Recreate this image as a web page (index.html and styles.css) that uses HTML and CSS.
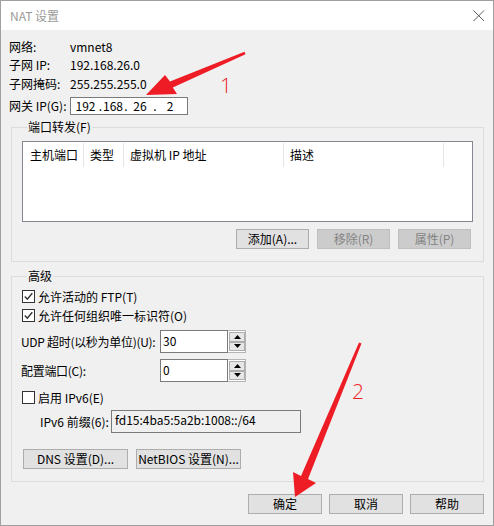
FILE: index.html
```html
<!DOCTYPE html>
<html lang="zh-CN">
<head>
<meta charset="utf-8">
<title>NAT 设置</title>
<link rel="stylesheet" href="styles.css">
</head>
<body>
<div class="window">
  <div class="titlebar">
    <span class="title">NAT 设置</span>
    <svg class="close" width="12" height="12" viewBox="0 0 12 12"><path d="M0.5 0.5 L11 11 M11 0.5 L0.5 11" stroke="#5a5a5a" stroke-width="1" fill="none"/></svg>
  </div>
  <div class="info">
    <div class="irow"><span class="lbl">网络:</span><span>vmnet8</span></div>
    <div class="irow"><span class="lbl">子网 IP:</span><span>192.168.26.0</span></div>
    <div class="irow r3"><span class="lbl">子网掩码:</span><span>255.255.255.0</span></div>
    <div class="irow gw"><span class="lbl">网关 IP(G):</span>
      <div class="ipbox"><span>192</span><span>.</span><span>168</span><span>.</span><span>26</span><span>.</span><span>2</span></div>
    </div>
  </div>
  <fieldset class="group pf">
    <legend>端口转发(F)</legend>
    <div class="list">
      <div class="lhead">
        <div class="col c1">主机端口</div>
        <div class="col c2">类型</div>
        <div class="col c3">虚拟机 IP 地址</div>
        <div class="col c4">描述</div>
      </div>
    </div>
    <div class="btnrow">
      <button class="btn">添加(A)...</button>
      <button class="btn dis">移除(R)</button>
      <button class="btn dis">属性(P)</button>
    </div>
  </fieldset>
  <fieldset class="group adv">
    <legend>高级</legend>
    <div class="chk"><span class="box"><svg width="11" height="11" viewBox="0 0 11 11"><path d="M1.8 5.6 L4.3 8.3 L9.3 2.2" stroke="#333" stroke-width="1.4" fill="none"/></svg></span><span>允许活动的 FTP(T)</span></div>
    <div class="chk"><span class="box"><svg width="11" height="11" viewBox="0 0 11 11"><path d="M1.8 5.6 L4.3 8.3 L9.3 2.2" stroke="#333" stroke-width="1.4" fill="none"/></svg></span><span>允许任何组织唯一标识符(O)</span></div>
    <div class="spinrow"><span class="lbl2">UDP 超时(以秒为单位)(U):</span>
      <div class="edit">30</div>
      <div class="spin">
        <span class="sbtn"><svg width="7" height="4" viewBox="0 0 7 4"><path d="M0 4 L3.5 0 L7 4 Z" fill="#000"/></svg></span>
        <span class="sbtn"><svg width="7" height="4" viewBox="0 0 7 4"><path d="M0 0 L7 0 L3.5 4 Z" fill="#000"/></svg></span>
      </div>
    </div>
    <div class="spinrow"><span class="lbl2">配置端口(C):</span>
      <div class="edit">0</div>
      <div class="spin">
        <span class="sbtn"><svg width="7" height="4" viewBox="0 0 7 4"><path d="M0 4 L3.5 0 L7 4 Z" fill="#000"/></svg></span>
        <span class="sbtn"><svg width="7" height="4" viewBox="0 0 7 4"><path d="M0 0 L7 0 L3.5 4 Z" fill="#000"/></svg></span>
      </div>
    </div>
    <div class="chk ipv6chk"><span class="box"></span><span>启用 IPv6(E)</span></div>
    <div class="ip6"><span class="lbl3">IPv6 前缀(6):</span><div class="ro">fd15:4ba5:5a2b:1008::/64</div></div>
    <div class="dnsrow">
      <button class="btn">DNS 设置(D)...</button>
      <button class="btn">NetBIOS 设置(N)...</button>
    </div>
  </fieldset>
  <div class="footer">
    <button class="btn">确定</button>
    <button class="btn">取消</button>
    <button class="btn">帮助</button>
  </div>
</div>
<svg class="anno" width="494" height="526" viewBox="0 0 494 526">
  <polygon points="146,95 165,75 170,81.5 244.5,51.8 245.5,54.2 172.8,87.6 177,94" fill="#ee1c25"/>
  <polygon points="295,497 293,472 301,476 359,342.5 361.5,343.5 308,479 316,483" fill="#ee1c25"/>
  <text x="220" y="93" class="num">1</text>
  <text x="352" y="399" class="num">2</text>
</svg>
</body>
</html>
```
FILE: styles.css
```css
* { box-sizing: border-box; }
html, body { margin: 0; padding: 0; }
body {
  position: relative;
  font-family: "Noto Sans CJK SC", "Noto Sans", sans-serif;
  font-size: 12px;
  line-height: 16px;
  color: #000;
  background: #fff;
}
.window {
  width: 494px;
  height: 526px;
  border: 1px solid #a0a0a0;
  background: #f0f0f0;
  display: flex;
  flex-direction: column;
}
.titlebar {
  height: 29px;
  flex: none;
  background: #fff;
  display: flex;
  align-items: center;
  justify-content: space-between;
  padding-left: 9px;
  padding-right: 8px;
}
.title { color: #9a9a9a; }
.close { width: 12px; height: 12px; }

.info { padding: 8px 0 0 8px; }
.irow { display: flex; align-items: center; height: 18px; }
.irow.r3 { height: 19px; }
.irow.gw { margin-top: 4px; }
.lbl { width: 61px; flex: none; }
.ipbox {
  width: 118px;
  height: 18px;
  border: 1px solid #7a7a7a;
  background: #fff;
  display: grid;
  grid-template-columns: 25px 5px 18px 10px 18px 12px 18px;
  padding-left: 2px;
  align-items: center;
  text-align: center;
  line-height: 16px;
}

.group {
  margin: 0 9px 0 10px;
  padding: 0 10px 12px 10px;
  border: 1px solid #dcdcdc;
  min-width: 0;
}
.group legend {
  margin-left: 5px;
  padding: 0 1px;
  line-height: 16px;
}
.pf { margin-top: 4px; padding-top: 6px; }
.list {
  height: 81px;
  border: 1px solid #828790;
  background: #fff;
}
.lhead { display: flex; height: 25px; padding-top: 1px; }
.col {
  height: 24px;
  border-right: 1px solid #e5e5e5;
  padding-left: 6px;
  line-height: 24px;
}
.c1 { width: 61px; padding-left: 7px; }
.c2 { width: 40px; }
.c3 { width: 160px; }
.c4 { width: 160px; }

.btn {
  font: inherit;
  height: 20px;
  border: 1px solid #adadad;
  background: #e1e1e1;
  color: #000;
  padding: 0;
  line-height: 18px;
  margin: 0;
}
.btn.dis { background: #cccccc; border-color: #bfbfbf; color: #838383; }
.btnrow {
  display: flex;
  justify-content: flex-end;
  gap: 8px;
  margin-top: 7px;
  padding-right: 2px;
}
.btnrow .btn { width: 73px; }

.adv { margin-top: 6px; padding-top: 3px; }
.chk { display: flex; align-items: center; height: 19px; gap: 3px; }
.box {
  width: 13px;
  height: 13px;
  border: 1px solid #333;
  background: #fff;
  display: flex;
}
.spinrow { display: flex; align-items: center; height: 23px; margin-top: 5px; }
.spinrow + .spinrow { margin-top: 6px; }
.lbl2 {
  width: 139px;
  flex: none;
  margin-left: -1px;
  white-space: nowrap;
  letter-spacing: -0.3px;
}
.edit {
  width: 68px;
  height: 23px;
  flex: none;
  border: 1px solid #7a7a7a;
  background: #fff;
  padding: 2px 0 0 2px;
}
.spin {
  width: 18px;
  height: 23px;
  flex: none;
  border: 1px solid #b4b4b4;
  border-left: 0;
  padding: 1px 0 1px 1px;
  display: flex;
  flex-direction: column;
  background: #fff;
}
.sbtn {
  width: 16px;
  height: 10px;
  border: 1px solid #adadad;
  background: #e6e6e6;
  display: flex;
  align-items: center;
  justify-content: center;
}
.ipv6chk { margin-top: 6px; }
.ip6 { display: flex; align-items: center; height: 23px; margin-top: 3px; padding-left: 18px; }
.lbl3 { width: 71px; flex: none; white-space: nowrap; }
.ro {
  width: 190px;
  height: 23px;
  border: 1px solid #7a7a7a;
  background: #f0f0f0;
  padding: 1px 0 0 3px;
}
.dnsrow { display: flex; gap: 8px; margin-top: 16px; padding-left: 1px; }
.dnsrow .btn { width: 105px; }

.footer {
  display: flex;
  justify-content: flex-end;
  gap: 7px;
  margin-top: 12px;
  padding-right: 9px;
}
.footer .btn { width: 74px; }

.anno {
  position: absolute;
  top: 0;
  left: 0;
  pointer-events: none;
}
.num {
  font-family: "Open Sans", "Noto Sans", sans-serif;
  font-weight: 300;
  font-size: 21px;
  fill: #ee1c25;
}
```
